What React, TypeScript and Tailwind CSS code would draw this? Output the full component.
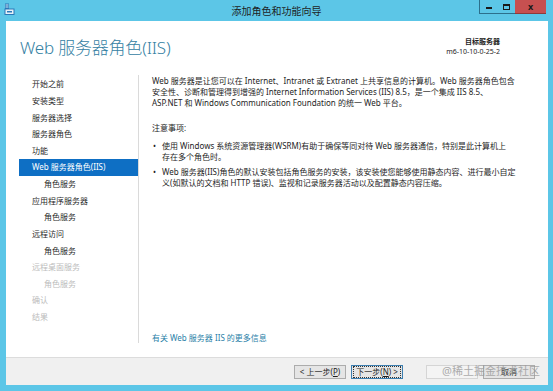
import React from "react";

const FONT = '"Noto Sans", "Noto Sans CJK SC", sans-serif';

type NavItem = { label: string; indent?: boolean; state: "normal" | "active" | "disabled" };

const nav: NavItem[] = [
  { label: "开始之前", state: "normal" },
  { label: "安装类型", state: "normal" },
  { label: "服务器选择", state: "normal" },
  { label: "服务器角色", state: "normal" },
  { label: "功能", state: "normal" },
  { label: "Web 服务器角色(IIS)", state: "active" },
  { label: "角色服务", indent: true, state: "normal" },
  { label: "应用程序服务器", state: "normal" },
  { label: "角色服务", indent: true, state: "normal" },
  { label: "远程访问", state: "normal" },
  { label: "角色服务", indent: true, state: "normal" },
  { label: "远程桌面服务", state: "disabled" },
  { label: "角色服务", indent: true, state: "disabled" },
  { label: "确认", state: "disabled" },
  { label: "结果", state: "disabled" },
];

function AppIcon() {
  return (
    <svg width="11" height="12" viewBox="0 0 11 12">
      <rect x="1" y="0.5" width="4" height="6" fill="#2a78b8" />
      <rect x="1.5" y="1.5" width="3" height="1" fill="#cfe6f6" />
      <rect x="1.5" y="3.5" width="3" height="1" fill="#cfe6f6" />
      <rect x="1" y="6" width="9" height="5.5" fill="#e8f1f8" stroke="#2a78b8" strokeWidth="1" />
      <rect x="3" y="8" width="5" height="1.5" fill="#2a78b8" />
    </svg>
  );
}

function Btn({ children, focused, disabled }: { children?: React.ReactNode; focused?: boolean; disabled?: boolean }) {
  return (
    <div
      className={
        "w-[52px] h-[14px] flex items-center justify-center text-[8px] leading-none border " +
        (disabled
          ? "border-[#d5d5d5] bg-[#f4f4f4] text-[#b5b5b5]"
          : focused
          ? "border-[#3c7fb1] bg-[#e5e5e5] text-[#1e1e1e]"
          : "border-[#acacac] bg-[#e5e5e5] text-[#1e1e1e]")
      }
    >
      {focused ? (
        <div className="w-full h-full flex items-center justify-center border border-dotted border-[#333] m-[1px]">{children}</div>
      ) : (
        children
      )}
    </div>
  );
}

export default function App() {
  return (
    <div className="w-[553px] h-[391px] bg-[#5cc6e7] flex flex-col overflow-hidden relative" style={{ fontFamily: FONT }}>
      {/* Title bar */}
      <div className="h-[21px] grid grid-cols-[1fr_auto_1fr] items-start">
        <div className="pl-[4px] pt-[3px]">
          <AppIcon />
        </div>
        <div className="pt-[5px] text-[10px] leading-[12px] text-[#1e1e1e]">添加角色和功能向导</div>
        <div className="flex justify-end pr-[7px]">
          <div className="w-[18px] h-[14px] border border-[#2c6f8c] border-t-0 border-r-0 flex items-end justify-center pb-[4px]">
            <div className="w-[6px] h-[2px] bg-[#1a1a1a]" />
          </div>
          <div className="w-[18px] h-[14px] border-b border-[#2c6f8c] flex items-center justify-center">
            <div className="w-[7px] h-[6px] border-[1.5px] border-t-[2px] border-[#1a1a1a]" />
          </div>
          <div className="w-[31px] h-[14px] bg-[#c75050] border-b border-[#8f3a3a] flex items-center justify-center text-[9px] font-bold leading-none text-[#1a1a1a]">
            x
          </div>
        </div>
      </div>

      {/* Window body */}
      <div className="flex-1 ml-[6px] mr-[5px] mb-[6px] bg-white flex flex-col">
        {/* Header */}
        <div className="h-[54px] flex justify-between items-start pl-[14px] pr-[48px]">
          <div className="pt-[16px] text-[17px] leading-[22px] font-light text-[#3581a3] tracking-[-0.2px]">Web 服务器角色(IIS)</div>
          <div className="pt-[16px] flex flex-col items-end text-[7px] leading-[10px] text-[#1e1e1e]">
            <div className="font-bold">目标服务器</div>
            <div>m6-10-10-0-25-2</div>
          </div>
        </div>

        {/* Main */}
        <div className="flex-1 flex pb-[14px]">
          <div className="w-[133px] border-r border-[#dadada] pl-[13px] pt-[1px]">
            {nav.map((item, i) => (
              <div
                key={i}
                className={
                  "h-[16.64px] flex items-center text-[8px] leading-none whitespace-nowrap " +
                  (item.indent ? "pl-[25px] " : "pl-[13px] ") +
                  (item.state === "active"
                    ? "bg-[#0e6fc4] text-white"
                    : item.state === "disabled"
                    ? "text-[#bcbcbc]"
                    : "text-[#2a2a2a]")
                }
              >
                {item.label}
              </div>
            ))}
          </div>

          <div className="flex-1 flex flex-col pl-[13px] pr-[8px] text-[8px] leading-[11px] text-[#1e1e1e] whitespace-nowrap">
            <div>
              <div>Web 服务器是让您可以在 Internet、Intranet 或 Extranet 上共享信息的计算机。Web 服务器角色包含</div>
              <div>安全性、诊断和管理得到增强的 Internet Information Services (IIS) 8.5，是一个集成 IIS 8.5、</div>
              <div>ASP.NET 和 Windows Communication Foundation 的统一 Web 平台。</div>
            </div>
            <div className="mt-[14px]">注意事项:</div>
            <div className="mt-[7px] flex flex-col gap-[4px]">
              <div className="flex">
                <div className="w-[10px] pl-[1px]">•</div>
                <div>
                  <div>使用 Windows 系统资源管理器(WSRM)有助于确保等同对待 Web 服务器通信，特别是此计算机上</div>
                  <div>存在多个角色时。</div>
                </div>
              </div>
              <div className="flex">
                <div className="w-[10px] pl-[1px]">•</div>
                <div>
                  <div>Web 服务器(IIS)角色的默认安装包括角色服务的安装，该安装使您能够使用静态内容、进行最小自定</div>
                  <div>义(如默认的文档和 HTTP 错误)、监视和记录服务器活动以及配置静态内容压缩。</div>
                </div>
              </div>
            </div>
            <div className="mt-auto text-[#2a7fa8]">有关 Web 服务器 IIS 的更多信息</div>
          </div>
        </div>

        {/* Footer */}
        <div className="h-[28px] border-t border-[#dcdcdc] bg-[#f0f0f0] flex items-center justify-end pr-[13px] relative">
          <div className="flex items-center">
            <Btn>&lt; 上一步(<span className="underline">P</span>)</Btn>
            <div className="w-[5px]" />
            <Btn focused>
              下一步(<span className="underline">N</span>) &gt;
            </Btn>
            <div className="w-[23px]" />
            <Btn disabled />
            <div className="w-[5px]" />
            <Btn>取消</Btn>
          </div>
          <div className="absolute right-[8px] top-[6px] text-[11px] leading-[14px] text-[#9a9a9a] opacity-80 pointer-events-none">
            @稀土掘金技术社区
          </div>
        </div>
      </div>
    </div>
  );
}
